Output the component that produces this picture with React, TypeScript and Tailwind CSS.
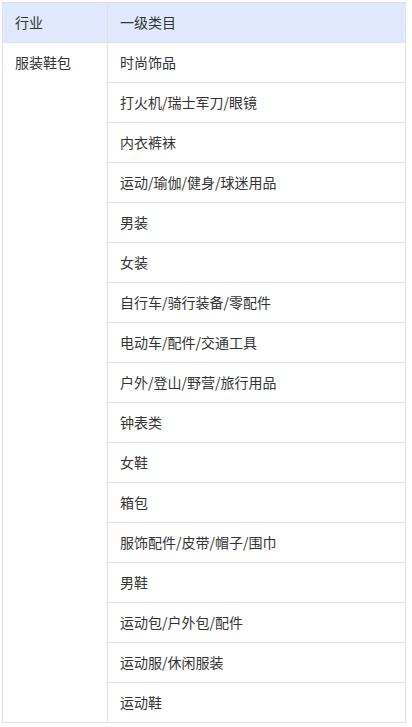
const categories = [
  "时尚饰品",
  "打火机/瑞士军刀/眼镜",
  "内衣裤袜",
  "运动/瑜伽/健身/球迷用品",
  "男装",
  "女装",
  "自行车/骑行装备/零配件",
  "电动车/配件/交通工具",
  "户外/登山/野营/旅行用品",
  "钟表类",
  "女鞋",
  "箱包",
  "服饰配件/皮带/帽子/围巾",
  "男鞋",
  "运动包/户外包/配件",
  "运动服/休闲服装",
  "运动鞋",
]

export default function App() {
  return (
    <div className="min-h-screen bg-white pt-[2px] pl-[2px] font-['Noto_Sans_CJK_SC','Noto_Sans',sans-serif] text-[14px] text-[#333]">
      <table className="w-[404px] table-fixed border-collapse">
        <colgroup>
          <col className="w-[105px]" />
          <col />
        </colgroup>
        <thead>
          <tr className="h-[40px] bg-[#e0e9fd]">
            <th className="border border-[#dfe1e5] px-3 text-left font-normal">行业</th>
            <th className="border border-[#dfe1e5] px-3 text-left font-normal">一级类目</th>
          </tr>
        </thead>
        <tbody>
          {categories.map((c, i) => (
            <tr key={c} className="h-[40px]">
              {i === 0 && (
                <td
                  rowSpan={categories.length}
                  className="border border-[#dfe1e5] px-3 pt-[9px] align-top"
                >
                  服装鞋包
                </td>
              )}
              <td className="border border-[#dfe1e5] px-3">{c}</td>
            </tr>
          ))}
        </tbody>
      </table>
    </div>
  )
}
